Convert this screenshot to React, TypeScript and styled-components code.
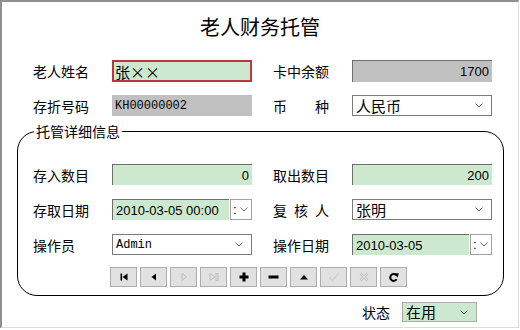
import React from "react";
import styled, { createGlobalStyle } from "styled-components";

const GlobalStyle = createGlobalStyle`
  html, body { margin: 0; padding: 0; background: #fff; }
  body { font-family: "Noto Sans CJK SC", "Noto Sans", sans-serif; color: #000; }
`;

const CJK = `"Noto Sans CJK SC", "Noto Sans", sans-serif`;
const SANS = `"Liberation Sans", "Noto Sans CJK SC", sans-serif`;
const MONO = `"Liberation Mono", "Noto Sans CJK SC", monospace`;
const GREEN = "#cce8cf";
const GRAY = "#c0c0c0";

const Window = styled.div`
  box-sizing: border-box;
  width: 519px;
  height: 328px;
  border-left: 2px solid #8f8f8f;
  border-top: 2px solid #8f8f8f;
  border-right: 1px solid #dcdcdc;
  border-bottom: 1px solid #dcdcdc;
  background: #fff;
  display: flex;
  flex-direction: column;
`;

const Title = styled.h1`
  margin: 13px 0 0;
  height: 24px;
  line-height: 24px;
  font-size: 20px;
  font-weight: normal;
  text-align: center;
  font-family: ${CJK};
`;

const Form = styled.div<{ $top: number; $left: number; $gap: number }>`
  display: flex;
  flex-direction: column;
  gap: ${p => p.$gap}px;
  margin-top: ${p => p.$top}px;
  padding-left: ${p => p.$left}px;
`;

const Row = styled.div<{ $h?: number }>`
  display: flex;
  gap: 21px;
  height: ${p => p.$h ?? 21}px;
`;

const Group = styled.div`
  display: flex;
  align-items: center;
  width: 219px;
  height: 100%;
`;

const Label = styled.span<{ $spread?: boolean }>`
  box-sizing: border-box;
  flex: none;
  width: 79px;
  padding-right: ${p => (p.$spread ? "23px" : "0")};
  text-align-last: ${p => (p.$spread ? "justify" : "auto")};
  font-size: 14px;
  line-height: 16px;
  font-family: ${CJK};
`;

const Field = styled.input<{ $bg: string; $align?: string; $mono?: boolean; $w?: number }>`
  box-sizing: border-box;
  width: ${p => p.$w ?? 140}px;
  height: 100%;
  margin: 0;
  padding: 0 3px;
  background: ${p => p.$bg};
  border: none;
  border-radius: 0;
  font-family: ${p => (p.$mono ? MONO : SANS)};
  font-size: ${p => (p.$mono ? "12px" : "13px")};
  text-align: ${p => p.$align ?? "left"};
  color: #000;
  outline: none;
`;

const SunkenField = styled(Field)`
  border-top: 1px solid #6e6e6e;
  border-left: 1px solid #6e6e6e;
`;

const NameField = styled(Field)`
  border: 2px solid #c0343c;
  padding: 0 1px;
  font-family: ${CJK};
  font-size: 15px;
`;

const Select = styled.div<{ $bg?: string; $w?: number; $mono?: boolean; $border?: string }>`
  box-sizing: border-box;
  display: flex;
  align-items: center;
  justify-content: space-between;
  width: ${p => p.$w ?? 140}px;
  height: 100%;
  padding: 0 8px 0 3px;
  background: ${p => p.$bg ?? "#fff"};
  border: 1px solid ${p => p.$border ?? "#7a7a7a"};
  font-family: ${p => (p.$mono ? MONO : CJK)};
  font-size: ${p => (p.$mono ? "12px" : "15px")};
  line-height: 18px;
`;

const DateBox = styled.div`
  display: flex;
  gap: 1px;
  width: 140px;
  height: 100%;
`;

const DropButton = styled.div`
  box-sizing: border-box;
  display: flex;
  align-items: center;
  justify-content: space-between;
  width: 22px;
  height: 100%;
  padding: 0 3px 0 2px;
  background: #fff;
  border: 1px solid #a0a0a0;
  font-family: ${SANS};
  font-size: 13px;
`;

const Fieldset = styled.fieldset`
  box-sizing: border-box;
  width: 487px;
  margin: 7px 0 0 15px;
  padding: 0 0 8px 15px;
  border: 1px solid #000;
  border-radius: 20px;
  min-width: 0;
`;

const Legend = styled.legend`
  margin-left: 1px;
  padding: 0 2px;
  font-size: 14px;
  line-height: 16px;
  font-family: ${CJK};
`;

const Toolbar = styled.div`
  display: flex;
  gap: 3px;
  height: 20px;
  margin: 12px 0 0 77px;
`;

const ToolButton = styled.button`
  box-sizing: border-box;
  display: flex;
  align-items: center;
  justify-content: center;
  width: 27px;
  height: 20px;
  padding: 0;
  background: #e1e1e1;
  border: 1px solid #adadad;
  border-radius: 0;
`;

const StatusRow = styled.div`
  display: flex;
  align-items: center;
  justify-content: flex-end;
  gap: 12px;
  height: 20px;
  margin-top: 6px;
  padding-right: 41px;
`;

const StatusLabel = styled.span`
  font-size: 14px;
  line-height: 16px;
  font-family: ${CJK};
`;

const Chevron = () => (
  <svg width="8" height="5" viewBox="0 0 8 5">
    <path d="M0.5 0.5 L4 4 L7.5 0.5" fill="none" stroke="#6a6a6a" strokeWidth="1" />
  </svg>
);

const DIS = "#bdbdbd";

const icons: React.ReactNode[] = [
  <svg width="10" height="10" viewBox="0 0 10 10" key="first">
    <rect x="1.5" y="1.5" width="1.6" height="7" fill="#000" />
    <polygon points="8.5,1.5 8.5,8.5 3.5,5" fill="#000" />
  </svg>,
  <svg width="10" height="10" viewBox="0 0 10 10" key="prev">
    <polygon points="7,1.5 7,8.5 2.5,5" fill="#000" />
  </svg>,
  <svg width="10" height="10" viewBox="0 0 10 10" key="next">
    <polygon points="3,1.5 3,8.5 7.5,5" fill="none" stroke={DIS} strokeWidth="1" />
  </svg>,
  <svg width="12" height="10" viewBox="0 0 12 10" key="last">
    <polygon points="2,1.5 2,8.5 7,5" fill="none" stroke={DIS} strokeWidth="1" />
    <rect x="8" y="1.5" width="2" height="7" fill="none" stroke={DIS} strokeWidth="1" />
  </svg>,
  <svg width="10" height="10" viewBox="0 0 10 10" key="plus">
    <rect x="0.5" y="3.5" width="9" height="3" fill="#000" />
    <rect x="3.5" y="0.5" width="3" height="9" fill="#000" />
  </svg>,
  <svg width="11" height="10" viewBox="0 0 11 10" key="minus">
    <rect x="0.5" y="3.5" width="10" height="3" fill="#000" />
  </svg>,
  <svg width="10" height="10" viewBox="0 0 10 10" key="up">
    <polygon points="1,7.5 9,7.5 5,3" fill="#000" />
  </svg>,
  <svg width="12" height="10" viewBox="0 0 12 10" key="check">
    <path d="M1.5 5.5 L4.5 8.5 L10.5 1.5" fill="none" stroke="#cfcfcf" strokeWidth="1.3" />
  </svg>,
  <svg width="10" height="10" viewBox="0 0 10 10" key="cancel">
    <path d="M1.5 1.5 L8.5 8.5 M8.5 1.5 L1.5 8.5" fill="none" stroke="#c4c4c4" strokeWidth="2.6" />
    <path d="M1.5 1.5 L8.5 8.5 M8.5 1.5 L1.5 8.5" fill="none" stroke="#e1e1e1" strokeWidth="1" />
  </svg>,
  <svg width="10" height="10" viewBox="0 0 10 10" key="refresh">
    <path d="M7.6 7.2 A3.4 3.4 0 1 1 7.2 3.2" fill="none" stroke="#000" strokeWidth="2" />
    <polygon points="5,1.6 9.8,1.2 8.6,5.4" fill="#000" />
  </svg>,
];

const disabled = [false, false, true, true, false, false, false, true, true, false];

export default function App() {
  return (
    <>
      <GlobalStyle />
      <Window>
        <Title>老人财务托管</Title>
        <Form $top={21} $left={31} $gap={13}>
          <Row $h={22}>
            <Group>
              <Label>老人姓名</Label>
              <NameField $bg={GREEN} readOnly value="张××" />
            </Group>
            <Group>
              <Label>卡中余额</Label>
              <SunkenField $bg={GRAY} $align="right" readOnly value="1700" />
            </Group>
          </Row>
          <Row>
            <Group>
              <Label>存折号码</Label>
              <Field $bg={GRAY} $mono readOnly value="KH00000002" />
            </Group>
            <Group>
              <Label $spread>币 种</Label>
              <Select>
                <span>人民币</span>
                <Chevron />
              </Select>
            </Group>
          </Row>
        </Form>
        <Fieldset>
          <Legend>托管详细信息</Legend>
          <Form $top={25} $left={0} $gap={14}>
            <Row>
              <Group>
                <Label>存入数目</Label>
                <SunkenField $bg={GREEN} $align="right" readOnly value="0" />
              </Group>
              <Group>
                <Label>取出数目</Label>
                <SunkenField $bg={GREEN} $align="right" readOnly value="200" />
              </Group>
            </Row>
            <Row>
              <Group>
                <Label>存取日期</Label>
                <DateBox>
                  <SunkenField $bg={GREEN} $w={117} readOnly value="2010-03-05 00:00" />
                  <DropButton>
                    <span>:</span>
                    <Chevron />
                  </DropButton>
                </DateBox>
              </Group>
              <Group>
                <Label $spread>复 核 人</Label>
                <Select>
                  <span>张明</span>
                  <Chevron />
                </Select>
              </Group>
            </Row>
            <Row>
              <Group>
                <Label>操作员</Label>
                <Select $mono>
                  <span>Admin</span>
                  <Chevron />
                </Select>
              </Group>
              <Group>
                <Label>操作日期</Label>
                <DateBox>
                  <SunkenField $bg={GREEN} $w={117} readOnly value="2010-03-05" />
                  <DropButton>
                    <span>:</span>
                    <Chevron />
                  </DropButton>
                </DateBox>
              </Group>
            </Row>
          </Form>
          <Toolbar>
            {icons.map((icon, i) => (
              <ToolButton key={i} disabled={disabled[i]}>
                {icon}
              </ToolButton>
            ))}
          </Toolbar>
        </Fieldset>
        <StatusRow>
          <StatusLabel>状态</StatusLabel>
          <Select $bg={GREEN} $w={75} $border="#ababab">
            <span>在用</span>
            <Chevron />
          </Select>
        </StatusRow>
      </Window>
    </>
  );
}
